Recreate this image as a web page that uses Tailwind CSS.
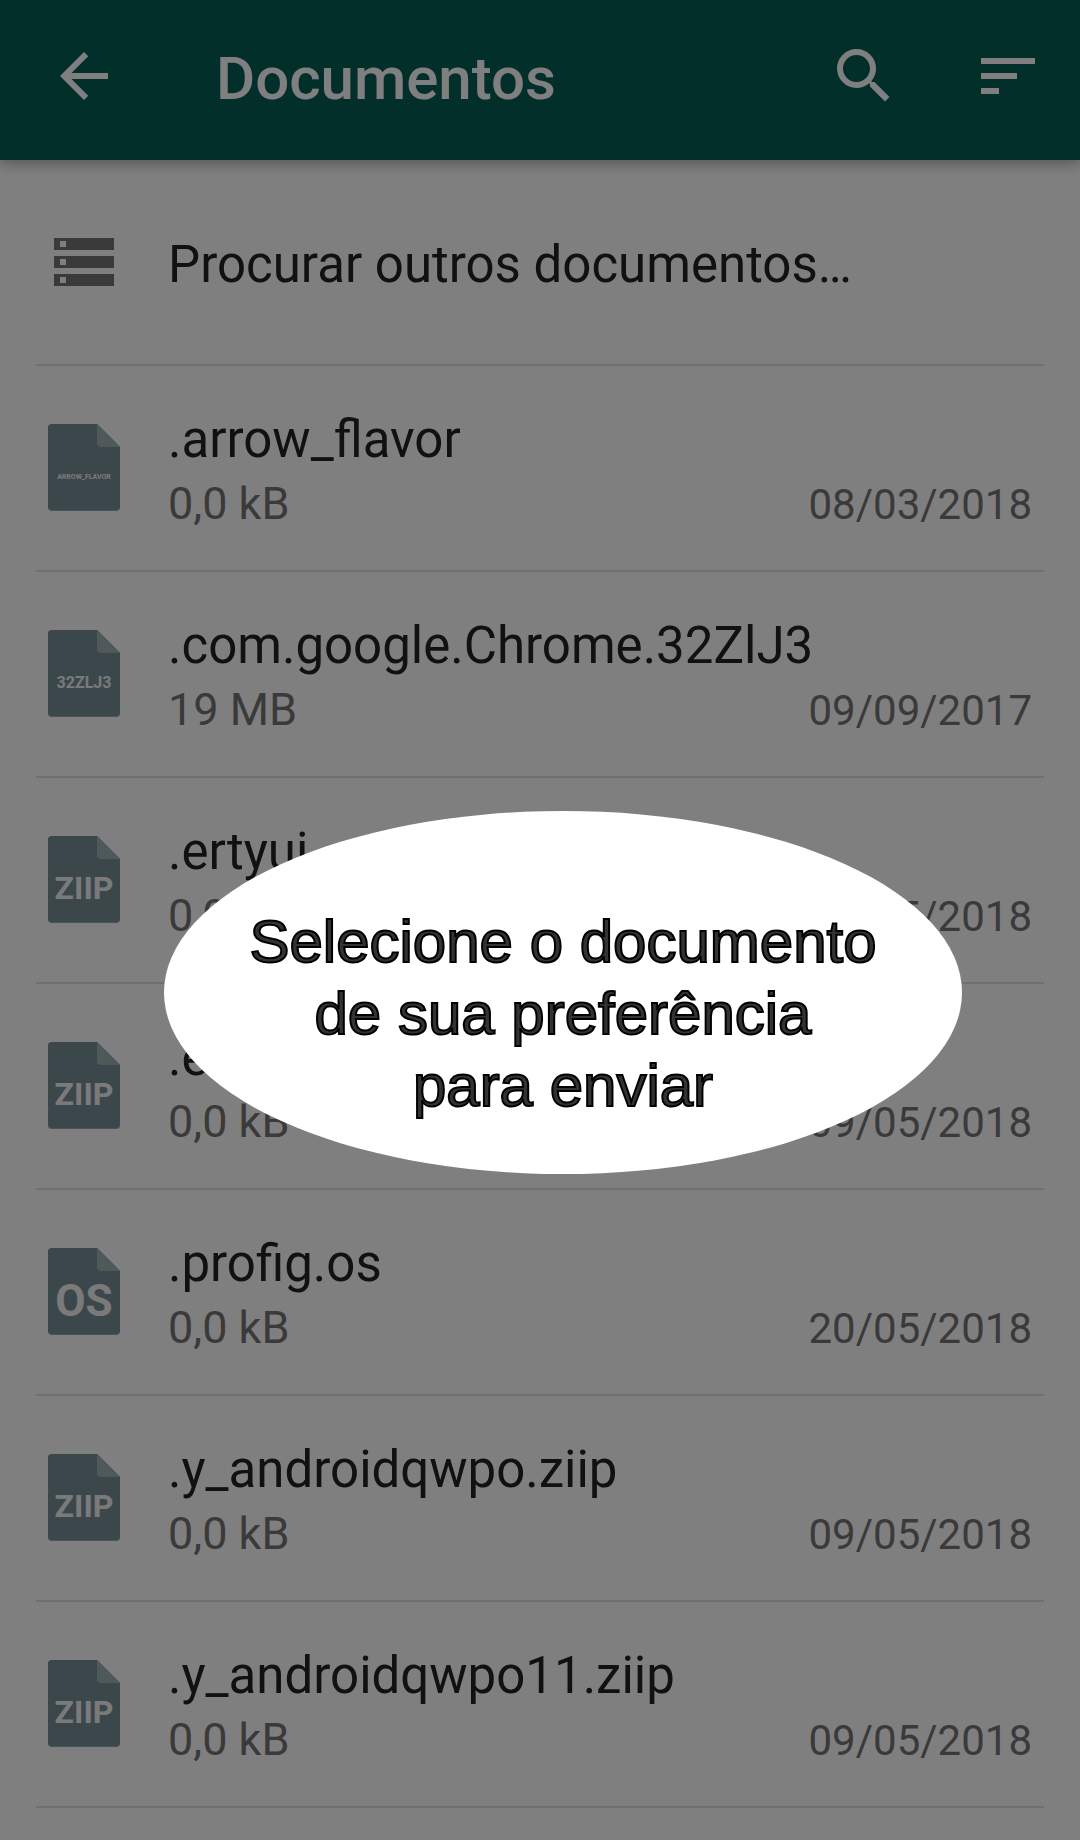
<!DOCTYPE html>
<html lang="pt-BR">
<head>
<meta charset="utf-8">
<meta name="viewport" content="width=device-width, initial-scale=1">
<title>Documentos</title>
<script src="https://cdn.jsdelivr.net/npm/@tailwindcss/browser@4"></script>
</head>
<body class="relative min-h-screen overflow-x-hidden bg-white font-[Roboto,sans-serif] text-[#222222]">

<svg class="hidden" aria-hidden="true">
  <symbol id="file" viewBox="0 0 72 87">
    <path fill="#93a9b0" d="M4 0H49L72 23V83a4 4 0 0 1-4 4H4a4 4 0 0 1-4-4V4a4 4 0 0 1 4-4z"/>
    <path fill="#798f98" d="M4 0H49L72 23V82a4 4 0 0 1-4 4H4a4 4 0 0 1-4-4V4a4 4 0 0 1 4-4z"/>
    <path fill="#a0b2b5" d="M49 0L72 23H53a4 4 0 0 1-4-4z"/>
  </symbol>
</svg>

<header class="relative flex h-40 items-start bg-[#075e54] pt-10 pr-9 pl-12 text-white shadow-[0_4px_12px_rgba(0,0,0,0.3)]">
  <button type="button" aria-label="Voltar" class="size-18 shrink-0">
    <svg viewBox="0 0 24 24" class="size-18" fill="currentColor"><path d="M20 11H7.83l5.59-5.59L12 4l-8 8 8 8 1.41-1.41L7.83 13H20z"/></svg>
  </button>
  <h1 class="ml-24 flex-1 text-[60px] leading-[78px] font-medium">Documentos</h1>
  <div class="flex gap-18">
    <button type="button" aria-label="Pesquisar" class="size-18">
      <svg viewBox="0 0 24 24" class="size-18" fill="currentColor"><path d="M15.5 14h-.79l-.28-.27A6.47 6.47 0 0 0 16 9.5 6.5 6.5 0 1 0 9.5 16c1.61 0 3.09-.59 4.23-1.57l.27.28v.79l5 4.99L20.49 19l-4.99-5zm-6 0C7.01 14 5 11.99 5 9.5S7.01 5 9.5 5 14 7.01 14 9.5 11.99 14 9.5 14z"/></svg>
    </button>
    <button type="button" aria-label="Ordenar" class="size-18">
      <svg viewBox="0 0 24 24" class="size-18" fill="currentColor"><path d="M3 18h6v-2H3zM3 6v2h18V6zm0 7h12v-2H3z"/></svg>
    </button>
  </div>
</header>

<main class="px-9">
  <a href="#" class="flex h-[206px] items-center border-b-2 border-[#dedede] px-3">
    <svg viewBox="0 0 24 24" class="size-18 shrink-0" fill="#757575"><path fill-rule="evenodd" d="M2 20h20v-4H2zm2-3h2v2H4zM2 4v4h20V4zm4 3H4V5h2zm-4 7h20v-4H2zm2-3h2v2H4z"/></svg>
    <span class="ml-12 pt-1.5 text-[51px] leading-16">Procurar outros documentos…</span>
  </a>
  <ul id="files"></ul>
</main>

<div class="absolute inset-0 bg-black/50"></div>

<div role="dialog" aria-label="Instrução" class="absolute top-[811px] right-[118px] left-[164px] flex h-[363px] items-center justify-center rounded-[50%] bg-white text-center font-['Liberation_Sans',Arial,sans-serif] text-[60px] leading-[72px] text-[#333333]">
  <p class="pt-[42px] [-webkit-text-stroke:2px_black]">Selecione o documento<br>de sua preferência<br>para enviar</p>
</div>

<script>
  // name, size, date, icon label, label font size, label baseline
  const files = [
    ['.arrow_flavor', '0,0 kB', '08/03/2018', 'ARROW_FLAVOR', 7, 55],
    ['.com.google.Chrome.32ZlJ3', '19 MB', '09/09/2017', '32ZLJ3', 16, 58],
    ['.ertyui', '0,0 kB', '09/05/2018', 'ZIIP', 32, 63],
    ['.ertyui', '0,0 kB', '09/05/2018', 'ZIIP', 32, 63],
    ['.profig.os', '0,0 kB', '20/05/2018', 'OS', 44, 68],
    ['.y_androidqwpo.ziip', '0,0 kB', '09/05/2018', 'ZIIP', 32, 63],
    ['.y_androidqwpo11.ziip', '0,0 kB', '09/05/2018', 'ZIIP', 32, 63],
  ];
  document.getElementById('files').innerHTML = files.map(([name, size, date, label, fs, y]) => `
    <li class="border-b-2 border-[#dedede]">
      <a href="#" class="flex h-51 items-start px-3">
        <svg viewBox="0 0 72 87" class="mt-[58px] h-[87px] w-18 shrink-0" aria-hidden="true">
          <use href="#file"/>
          <text x="36" y="${y}" font-size="${fs}" text-anchor="middle" fill="#f4f4f4" class="font-bold">${label}</text>
        </svg>
        <div class="ml-12 min-w-0 flex-1 pt-[42px] leading-16">
          <div class="truncate text-[51px] leading-16">${name}</div>
          <div class="flex items-baseline justify-between text-[#757575]">
            <span class="text-[45px] leading-16">${size}</span>
            <span class="text-[42px] leading-16">${date}</span>
          </div>
        </div>
      </a>
    </li>`).join('');
</script>
</body>
</html>
